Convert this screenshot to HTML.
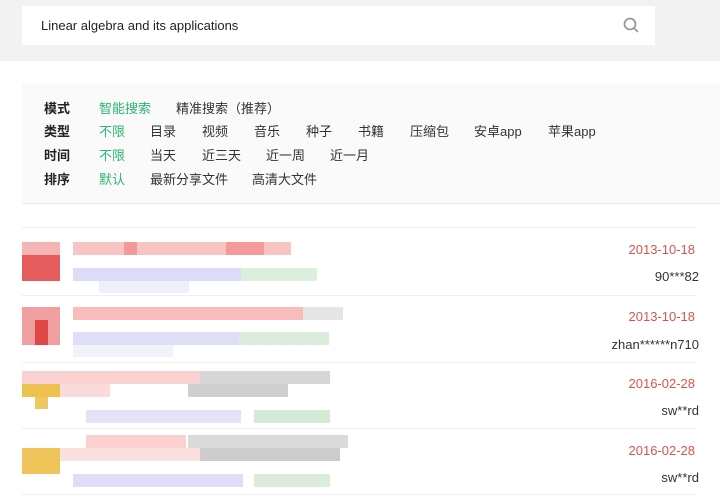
<!DOCTYPE html>
<html><head><meta charset="utf-8"><style>
*{margin:0;padding:0;box-sizing:border-box}
body{width:720px;height:498px;background:#fff;position:relative;overflow:hidden;font-family:"Liberation Sans","Noto Sans CJK SC",sans-serif;color:#333}
.top{position:absolute;left:0;top:0;width:720px;height:61px;background:#f2f2f2}
.search{position:absolute;left:22px;top:6px;width:633px;height:39px;background:#fff;font-size:13px;line-height:39px;padding-left:19px;color:#222}
.panel{position:absolute;left:22px;top:84px;width:698px;height:120px;background:#fafafa;border-bottom:1px solid #eaeaea}
.row{position:absolute;left:22px;font-size:13px;height:20px;line-height:20px;white-space:nowrap}
.row b{font-weight:bold;color:#222;position:absolute;left:0}
.row span{position:absolute}
.g{color:#2bb673}
.b{position:absolute}
.line{position:absolute;left:22px;width:674px;height:1px;background:#efefef}
.date{position:absolute;right:25px;font-size:13px;color:#d9534f}
.user{position:absolute;right:21px;font-size:13px;color:#333}
</style></head><body>
<div class="top"><div class="search">Linear algebra and its applications
<svg style="position:absolute;right:14px;top:11px" width="18" height="18" viewBox="0 0 18 18"><circle cx="7" cy="7" r="5.5" fill="none" stroke="#999" stroke-width="1.8"/><path d="M11 11l4 4" stroke="#999" stroke-width="1.8"/></svg></div></div>
<div class="panel">
<div class="row" style="top:15px"><b>模式</b><span class="g" style="left:55px">智能搜索</span><span style="left:132px">精准搜索（推荐）</span></div>
<div class="row" style="top:38px"><b>类型</b><span class="g" style="left:55px">不限</span><span style="left:106px">目录</span><span style="left:158px">视频</span><span style="left:210px">音乐</span><span style="left:262px">种子</span><span style="left:314px">书籍</span><span style="left:366px">压缩包</span><span style="left:430px">安卓app</span><span style="left:504px">苹果app</span></div>
<div class="row" style="top:62px"><b>时间</b><span class="g" style="left:55px">不限</span><span style="left:106px">当天</span><span style="left:158px">近三天</span><span style="left:222px">近一周</span><span style="left:286px">近一月</span></div>
<div class="row" style="top:86px"><b>排序</b><span class="g" style="left:55px">默认</span><span style="left:106px">最新分享文件</span><span style="left:208px">高清大文件</span></div>
</div>

<div class="line" style="top:227px"></div>
<div class="line" style="top:295px"></div>
<div class="line" style="top:362px"></div>
<div class="line" style="top:428px"></div>
<div class="line" style="top:494px"></div>

<!-- entry 1 -->
<div class="b" style="left:22px;top:242px;width:38px;height:13px;background:#f4b5b5"></div>
<div class="b" style="left:22px;top:255px;width:38px;height:26px;background:#e65c5c"></div>
<div class="b" style="left:73px;top:242px;width:218px;height:13px;background:#f9c4c4"></div>
<div class="b" style="left:124px;top:242px;width:13px;height:13px;background:#f29a9a"></div>
<div class="b" style="left:226px;top:242px;width:38px;height:13px;background:#f49a9a"></div>
<div class="b" style="left:73px;top:268px;width:168px;height:13px;background:#dcdcf8"></div>
<div class="b" style="left:241px;top:268px;width:76px;height:13px;background:#dcefdc"></div>
<div class="b" style="left:99px;top:281px;width:90px;height:12px;background:#f0f0fb"></div>

<!-- entry 2 -->
<div class="b" style="left:22px;top:307px;width:38px;height:38px;background:#f0a0a0"></div>
<div class="b" style="left:35px;top:320px;width:13px;height:25px;background:#e04848"></div>
<div class="b" style="left:73px;top:307px;width:230px;height:13px;background:#f9bcbc"></div>
<div class="b" style="left:303px;top:307px;width:40px;height:13px;background:#e6e6e6"></div>
<div class="b" style="left:73px;top:332px;width:166px;height:13px;background:#dedef7"></div>
<div class="b" style="left:239px;top:332px;width:90px;height:13px;background:#dcecdc"></div>
<div class="b" style="left:73px;top:345px;width:100px;height:12px;background:#f2f2fb"></div>

<!-- entry 3 -->
<div class="b" style="left:22px;top:371px;width:178px;height:13px;background:#fbd0d0"></div>
<div class="b" style="left:200px;top:371px;width:130px;height:13px;background:#d6d6d6"></div>
<div class="b" style="left:22px;top:384px;width:38px;height:13px;background:#ecc150"></div>
<div class="b" style="left:35px;top:397px;width:13px;height:12px;background:#f0c860"></div>
<div class="b" style="left:60px;top:384px;width:50px;height:13px;background:#fadada"></div>
<div class="b" style="left:188px;top:384px;width:100px;height:13px;background:#cfcfcf"></div>
<div class="b" style="left:86px;top:410px;width:155px;height:13px;background:#e2e2f8"></div>
<div class="b" style="left:254px;top:410px;width:76px;height:13px;background:#d4ead4"></div>

<!-- entry 4 -->
<div class="b" style="left:86px;top:435px;width:100px;height:13px;background:#fcd0d0"></div>
<div class="b" style="left:188px;top:435px;width:160px;height:13px;background:#dadada"></div>
<div class="b" style="left:22px;top:448px;width:38px;height:26px;background:#efc45a"></div>
<div class="b" style="left:60px;top:448px;width:140px;height:13px;background:#fbe0e0"></div>
<div class="b" style="left:200px;top:448px;width:140px;height:13px;background:#cccccc"></div>
<div class="b" style="left:73px;top:474px;width:170px;height:13px;background:#dedef8"></div>
<div class="b" style="left:254px;top:474px;width:76px;height:13px;background:#dcecdc"></div>

<div class="date" style="top:242px">2013-10-18</div>
<div class="user" style="top:269px">90***82</div>
<div class="date" style="top:309px">2013-10-18</div>
<div class="user" style="top:337px">zhan******n710</div>
<div class="date" style="top:376px">2016-02-28</div>
<div class="user" style="top:403px">sw**rd</div>
<div class="date" style="top:443px">2016-02-28</div>
<div class="user" style="top:470px">sw**rd</div>
</body></html>
